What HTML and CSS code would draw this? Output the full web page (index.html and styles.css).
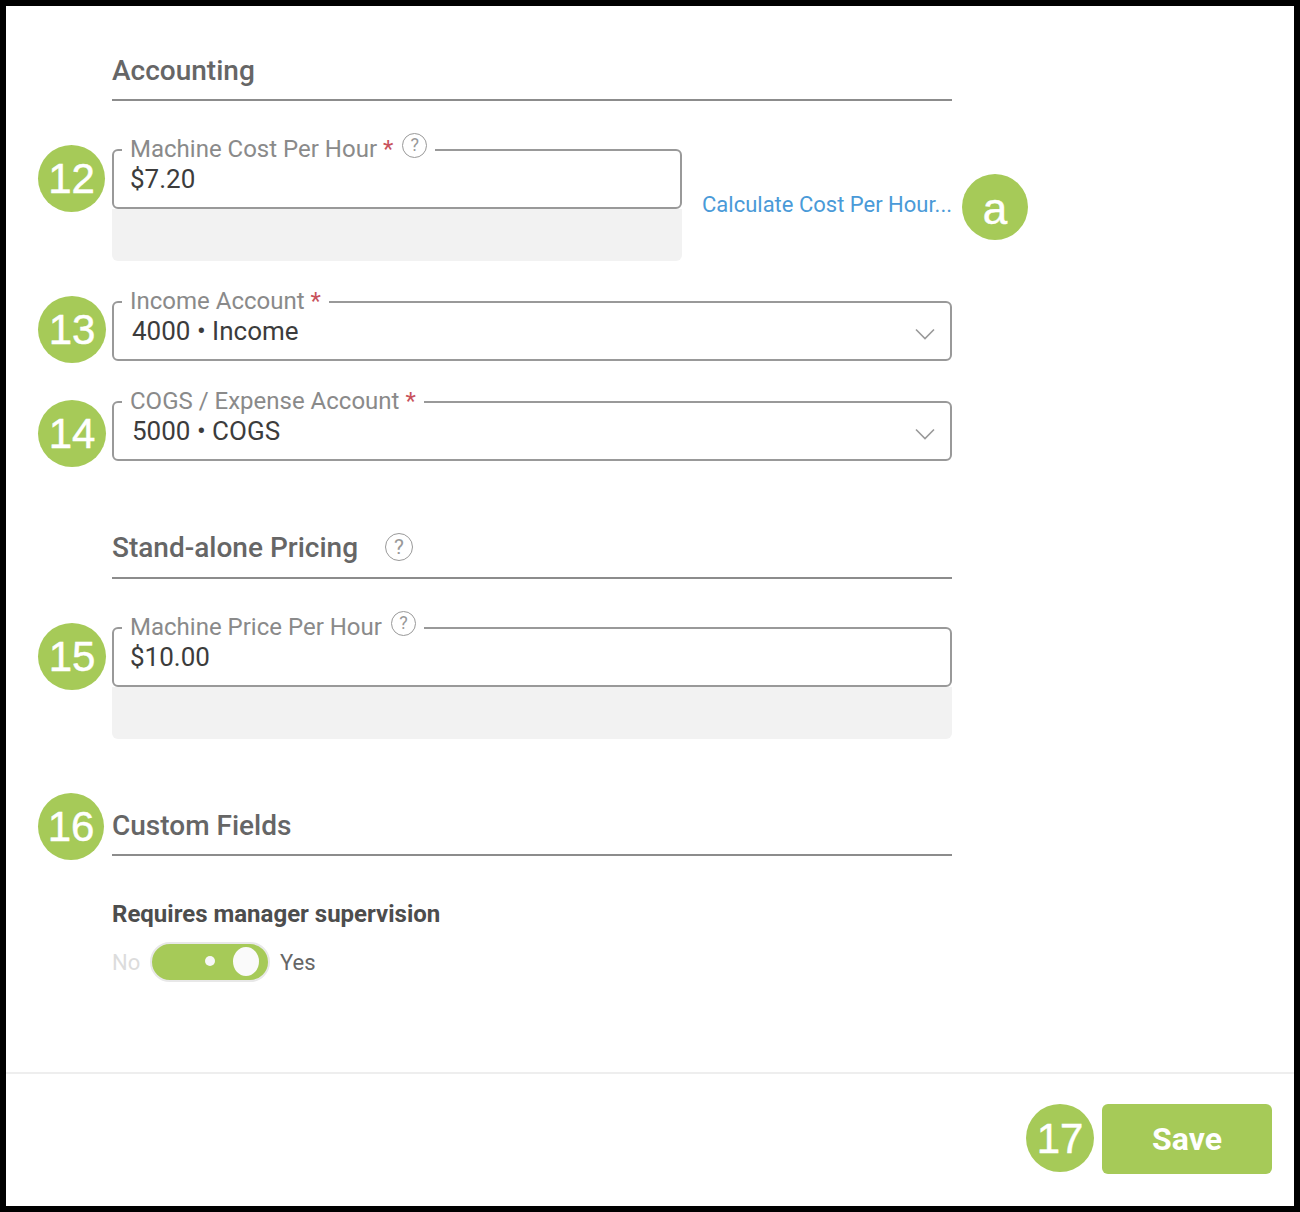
FILE: index.html
```html
<!DOCTYPE html>
<html lang="en">
<head>
<meta charset="utf-8">
<title>Machine accounting</title>
<link rel="stylesheet" href="styles.css">
</head>
<body>
<div class="frame">
  <main class="content">
    <h2 class="section-head first">Accounting</h2>

    <div class="row cost-row">
      <div class="field-group narrow">
        <span class="badge badge-12">12</span>
        <div class="field">
          <div class="label"><span>Machine Cost Per Hour</span><span class="star">*</span><span class="help help-raised help-cost">?</span></div>
          <div class="value">$7.20</div>
        </div>
        <div class="hint"></div>
      </div>
      <a class="calc-link" href="#">Calculate Cost Per Hour...</a>
      <span class="badge badge-a">a</span>
    </div>

    <div class="field select income">
      <span class="badge badge-13">13</span>
      <div class="label"><span>Income Account</span><span class="star">*</span></div>
      <div class="value select-value">4000 • Income</div>
      <svg class="chevron" width="20" height="12" viewBox="0 0 20 12"><path d="M1 1.5 L10 10.5 L19 1.5" fill="none" stroke="#999" stroke-width="1.6"/></svg>
    </div>

    <div class="field select cogs">
      <span class="badge badge-14">14</span>
      <div class="label"><span>COGS / Expense Account</span><span class="star">*</span></div>
      <div class="value select-value">5000 • COGS</div>
      <svg class="chevron" width="20" height="12" viewBox="0 0 20 12"><path d="M1 1.5 L10 10.5 L19 1.5" fill="none" stroke="#999" stroke-width="1.6"/></svg>
    </div>

    <h2 class="section-head pricing"><span>Stand-alone Pricing</span><span class="help help-head">?</span></h2>

    <div class="field-group price">
      <span class="badge badge-15">15</span>
      <div class="field">
        <div class="label"><span>Machine Price Per Hour</span><span class="help help-raised help-tight">?</span></div>
        <div class="value">$10.00</div>
      </div>
      <div class="hint"></div>
    </div>

    <h2 class="section-head custom"><span class="badge badge-16">16</span>Custom Fields</h2>

    <div class="custom-title">Requires manager supervision</div>
    <div class="toggle-row">
      <span class="toggle-no">No</span>
      <span class="toggle"><span class="toggle-dot"></span><span class="toggle-knob"></span></span>
      <span class="toggle-yes">Yes</span>
    </div>
  </main>

  <footer class="footer">
    <span class="badge badge-17">17</span>
    <button class="save" type="button">Save</button>
  </footer>
</div>
</body>
</html>
```

FILE: styles.css
```css
* { box-sizing: border-box; }
html, body { margin: 0; padding: 0; }
body { font-family: Roboto, "Liberation Sans", sans-serif; background: #fff; }

.frame {
  width: 1300px;
  height: 1212px;
  border: 6px solid #000;
  background: #fff;
  display: flex;
  flex-direction: column;
}
.content { flex: 1; padding-left: 106px; width: 946px; }

.section-head {
  position: relative;
  margin: 0;
  font-size: 28px;
  font-weight: 500;
  line-height: 34px;
  color: #666;
  border-bottom: 2px solid #8c8c8c;
  display: flex;
  align-items: center;
}
.section-head.first { padding-top: 48px; padding-bottom: 11px; }
.section-head.pricing { margin-top: 70px; padding-bottom: 12px; }
.section-head.custom { margin-top: 70px; padding-bottom: 11px; }

.row { display: flex; }
.cost-row { margin-top: 48px; position: relative; height: 112px; }
.field-group { position: relative; }
.field-group.narrow { width: 570px; flex: none; }
.field-group.price { margin-top: 48px; }

.field {
  position: relative;
  height: 60px;
  background: #fff;
  border: 2px solid #999;
  border-radius: 6px;
}
.select.income { margin-top: 40px; }
.select.cogs { margin-top: 40px; }

.label {
  position: absolute;
  left: 8px;
  top: -15px;
  height: 26px;
  padding: 0 8px;
  background: #fff;
  display: flex;
  align-items: center;
  font-size: 24px;
  line-height: 26px;
  color: #8a8a8a;
  white-space: nowrap;
}
.star { color: #c8525c; margin-left: 6px; }

.help {
  display: inline-flex;
  align-items: center;
  justify-content: center;
  width: 25px;
  height: 25px;
  border: 1.5px solid #999;
  border-radius: 50%;
  color: #999;
  font-size: 18px;
  font-weight: 400;
  line-height: 1;
  flex: none;
}
.help-raised { margin-left: 9px; transform: translateY(-4px); }
.help-cost { margin-left: 9px; transform: translateY(-4px); }
.help-tight { margin-left: 9px; }
.help-head { width: 28px; height: 28px; margin-left: 27px; font-size: 21px; transform: translateY(-1px); }

.value {
  position: absolute;
  left: 16px;
  top: 12px;
  font-size: 26px;
  line-height: 32px;
  color: #3c3c3c;
}
.select-value { left: 18px; }
.chevron { position: absolute; right: 15px; top: 25px; }

.hint {
  height: 52px;
  background: #f2f2f2;
  border-radius: 0 0 6px 6px;
}

.calc-link {
  margin-left: 20px;
  margin-top: 41px;
  height: 30px;
  font-size: 22px;
  line-height: 30px;
  color: #4a9ad8;
  text-decoration: none;
  white-space: nowrap;
}

.badge {
  display: flex;
  align-items: center;
  justify-content: center;
  width: 67px;
  height: 67px;
  padding-top: 1px;
  border-radius: 50%;
  background: #a6ca58;
  color: #fff;
  font-family: "Liberation Sans", Arial, sans-serif;
  font-size: 42px;
  font-weight: 400;
  line-height: 1;
  -webkit-text-stroke: 0.5px #fff;
  flex: none;
}
.badge-12 { position: absolute; left: -74px; top: -4px; }
.badge-13 { position: absolute; left: -76px; top: -7px; width: 68px; height: 67px; }
.badge-14 { position: absolute; left: -76px; top: -3px; width: 68px; height: 67px; }
.badge-15 { position: absolute; left: -74px; top: -4px; width: 68px; }
.badge-16 { position: absolute; left: -74px; top: -16px; width: 66px; }
.badge-a { margin-left: 10px; margin-top: 25px; width: 66px; height: 66px; padding-top: 4px; font-size: 44px; }

.custom-title {
  margin-top: 44px;
  font-size: 24px;
  font-weight: 700;
  line-height: 28px;
  color: #4d4d4d;
}
.toggle-row {
  margin-top: 14px;
  display: flex;
  align-items: center;
  height: 40px;
  font-size: 22px;
}
.toggle-no { color: #dcdcdc; width: 38px; }
.toggle-yes { color: #666; margin-left: 10px; }
.toggle {
  position: relative;
  width: 120px;
  height: 40px;
  border-radius: 20px;
  background: #a6ca58;
  border: 2px solid #e8e8e8;
}
.toggle-dot {
  position: absolute;
  left: 53px;
  top: 12px;
  width: 10px;
  height: 10px;
  border-radius: 50%;
  background: #f7f7f7;
}
.toggle-knob {
  position: absolute;
  left: 81px;
  top: 3px;
  width: 26px;
  height: 29px;
  border-radius: 50%;
  background: #fafafa;
}

.footer {
  height: 134px;
  border-top: 2px solid #eee;
  padding: 30px 22px 0 0;
  display: flex;
  justify-content: flex-end;
  align-items: flex-start;
}
.badge-17 { width: 68px; height: 68px; margin-right: 8px; }
.save {
  width: 170px;
  height: 70px;
  border: 0;
  border-radius: 6px;
  background: #a6ca58;
  color: #fff;
  font-family: Roboto, "Liberation Sans", sans-serif;
  font-size: 32px;
  font-weight: 700;
}
```
